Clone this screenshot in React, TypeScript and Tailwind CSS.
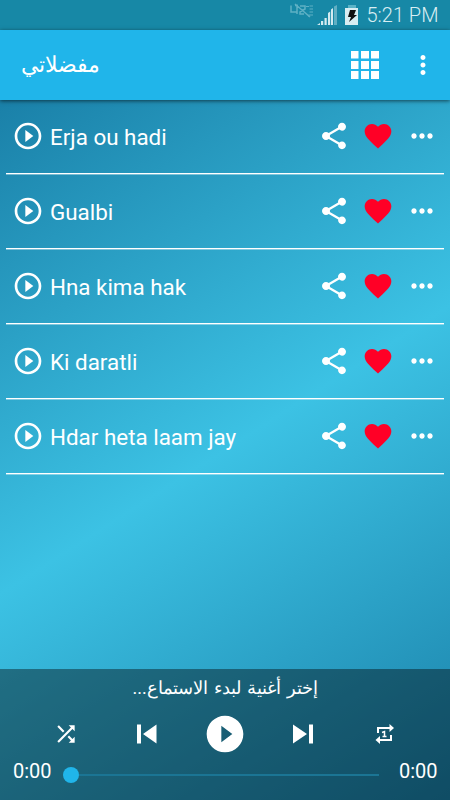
import React from 'react';
import { MdPlayCircleOutline, MdShare, MdFavorite, MdMoreHoriz, MdMoreVert, MdShuffle, MdPlayCircleFilled } from 'react-icons/md';

const songs = ['Erja ou hadi', 'Gualbi', 'Hna kima hak', 'Ki daratli', 'Hdar heta laam jay'];

const StatusBar: React.FC = () => {
    return (
        <div className="flex h-[30px] items-start bg-[#1788a6] pl-[290px]">
            <svg width="70" height="30" viewBox="0 0 70 30">
                {/* muted speaker over the network type */}
                <g fill="none" stroke="#5fb0c4" strokeWidth="1.5">
                    <path d="M1 5.500V12h6.500M7 4.500V14M5 5.500h3M10 6h5v3l-5 3v2h4M5 4l15 13" />
                    <path d="M16 6.500h3M19.500 6h3.500M19.500 9h3.500M19.500 12h3.500M19.500 15h3.500M19 14.500v2.500" strokeWidth="1" />
                </g>
                <g fill="#d3eaf0">
                    <path d="M27 25l3-2v2zM31 25v-4h2.200v4zM34.500 25v-7h2.200v7zM38 25v-12l2.200-1.500V25zM41 25V9.500L43 8v17z" />
                    <path d="M44 25V6.500l3-1.500v20z" opacity="0.4" />
                </g>
                <path d="M58 5h8v3h-8z" fill="#5bb3c7" />
                <path d="M55 8h13v17H55z" fill="#d8edf2" />
                <path d="M60 10h6l-2 5h3l-8 7 2-5h-3z" fill="#111" />
            </svg>
            <span className="ml-[6.5px] text-[20px] leading-[31px] font-light whitespace-nowrap text-[#d8eef3]">5:21 PM</span>
        </div>
    );
};

const Toolbar: React.FC = () => {
    return (
        <header className="relative flex h-[70px] items-center bg-[#20b5ea] pl-[21px] pr-[12px] shadow-[0_1px_4px_rgba(0,0,0,0.6)]">
            <h1 dir="rtl" className="text-[22px] leading-[30px]">مفضلاتي</h1>
            <svg className="ml-auto" width="28" height="28" viewBox="0 0 28 28" fill="currentColor">
                <path d="M0 0h7.500v7.500H0zM10 0h8v7.500h-8zM20 0h8v7.500h-8zM0 10h7.500v8H0zM10 10h8v8h-8zM20 10h8v8h-8zM0 20h7.500v8H0zM10 20h8v8h-8zM20 20h8v8h-8z" />
            </svg>
            <MdMoreVert size={30} className="ml-[29px]" />
        </header>
    );
};

const SongRow: React.FC<{ title: string }> = ({ title }) => {
    return (
        <li className="mx-[6px] flex h-[75px] flex-col">
            <div className="mb-px flex h-[72px] items-center px-[6px]">
                <MdPlayCircleOutline size={32} />
                <span className="ml-[6px] pt-px text-[22.4px] leading-[30px]">{title}</span>
                <div className="ml-auto flex gap-[12px]">
                    <MdShare size={32} />
                    <MdFavorite size={32} className="text-[#ff0026]" />
                    <MdMoreHoriz size={32} />
                </div>
            </div>
            <div className="h-px bg-white" />
            <div className="h-px bg-white/40" />
        </li>
    );
};

const Player: React.FC = () => {
    return (
        <footer className="h-[131px] bg-black/40">
            <p dir="rtl" className="h-[43px] pt-[4px] text-center text-[18px] leading-[30px] [word-spacing:1.5px]">إختر أغنية لبدء الاستماع...</p>
            <div className="flex h-[44px] items-center pl-[53px]">
                <MdShuffle size={26} />
                <svg className="ml-[58px]" width="20" height="20" viewBox="0 0 20 20" fill="currentColor">
                    <path d="M0 .5h4v19H0zM19.500 .5v19L6 10z" />
                </svg>
                <MdPlayCircleFilled size={44} className="ml-[46px]" />
                <svg className="ml-[46px]" width="20" height="20" viewBox="0 0 20 20" fill="currentColor">
                    <path d="M16 .5h4v19h-4zM0 .5v19L14 10z" />
                </svg>
                <svg className="ml-[62px]" width="20" height="22" viewBox="0 0 20 22" fill="none" stroke="currentColor" strokeWidth="2">
                    <path d="M3 10V5h13M16 12v5H4" />
                    <path d="M7 9.500l2.500-1V13.500M7.500 13.500h4" strokeWidth="1.500" />
                    <path d="M14.500 1l4.500 4-4.500 4zM5 13l-4.500 4L5 21z" fill="currentColor" stroke="none" />
                </svg>
            </div>
            <div className="flex h-[38px] items-center pl-[13px] pr-[12.500px] text-[20px] leading-[30px]">
                <span className="-mt-[9px] w-[50px]">0:00</span>
                <div className="flex w-[316px] items-center">
                    <div className="size-[16px] rounded-full bg-[#20b5ea]" />
                    <div className="h-[2px] flex-1 bg-[#1b7594]" />
                </div>
                <span className="-mt-[9px] ml-auto">0:00</span>
            </div>
        </footer>
    );
};

const App: React.FC = () => {
    return (
        <div className="flex h-[800px] w-[450px] flex-col overflow-hidden font-[Roboto,'Noto_Sans',sans-serif] text-white">
            <StatusBar />
            <Toolbar />
            <main className="flex flex-1 flex-col bg-[linear-gradient(147.3deg,#1a80a8,#3cc2e4_50%,#1a80a8)]">
                <ul className="flex-1">
                    {songs.map((title) => (
                        <SongRow key={title} title={title} />
                    ))}
                </ul>
                <Player />
            </main>
        </div>
    );
};

export default App;
